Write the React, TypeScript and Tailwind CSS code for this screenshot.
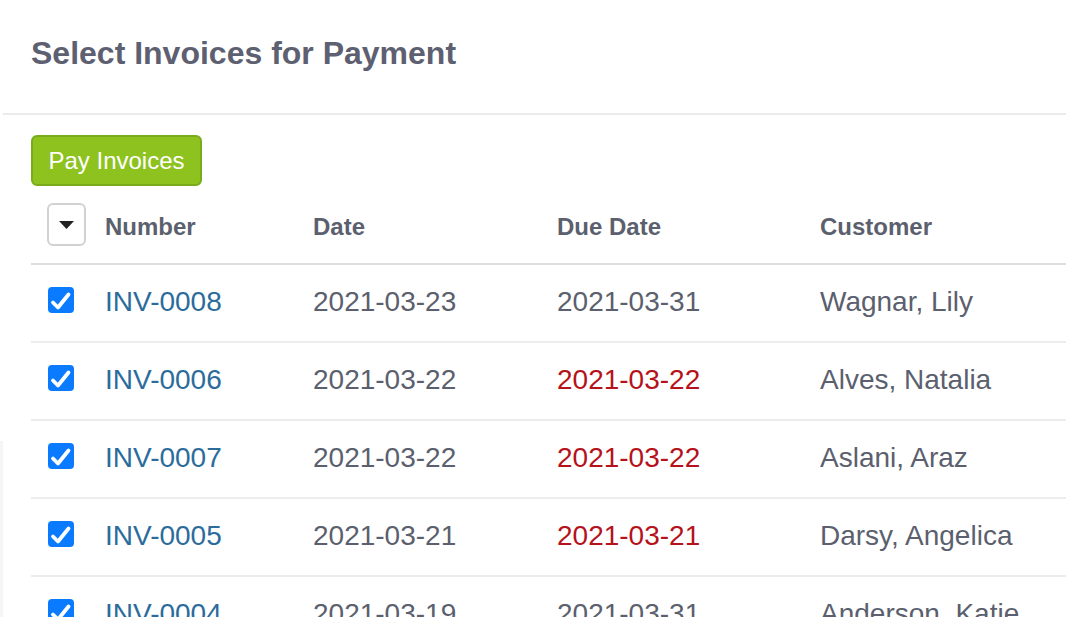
import {Fragment} from "react";

type Invoice = {
    number: string;
    date: string;
    due: string;
    overdue: boolean;
    customer: string;
};

const invoices: Invoice[] = [
    {number: "INV-0008", date: "2021-03-23", due: "2021-03-31", overdue: false, customer: "Wagnar, Lily"},
    {number: "INV-0006", date: "2021-03-22", due: "2021-03-22", overdue: true, customer: "Alves, Natalia"},
    {number: "INV-0007", date: "2021-03-22", due: "2021-03-22", overdue: true, customer: "Aslani, Araz"},
    {number: "INV-0005", date: "2021-03-21", due: "2021-03-21", overdue: true, customer: "Darsy, Angelica"},
    {number: "INV-0004", date: "2021-03-19", due: "2021-03-31", overdue: false, customer: "Anderson, Katie"},
];

const cols = "grid grid-cols-[74px_208px_244px_263px_1fr]";

// zaznaczony checkbox
const CheckBox = () => (
    <div className="mb-[6px] flex h-[26px] w-[26px] items-center justify-center rounded-[4px] bg-[#0a7bff]">
        <svg width="26" height="26" viewBox="0 0 26 26" fill="none">
            <path d="M5 15.5 L10 20.5 L20.5 7.5" stroke="white" strokeWidth="3.8" strokeLinecap="round" strokeLinejoin="round" />
        </svg>
    </div>
);

export default function App() {
    return (
        <div className="flex h-[617px] w-[1066px] overflow-hidden bg-white font-['Liberation_Sans',Arial,sans-serif] text-[#5b5f6e]">
            {/* pasek po lewej z sasiedniego panelu */}
            <div className="flex w-[3px] shrink-0 flex-col">
                <div className="h-[441px]" />
                <div className="flex-1 bg-[#f5f5f4]" />
            </div>

            <div className="min-w-0 flex-1">
                <div className="h-[113px] pl-[28px] pt-[33px]">
                    <h1 className="text-[32px] font-bold leading-[40px] text-[#5d6070]">Select Invoices for Payment</h1>
                </div>
                <div className="h-[2px] bg-[#ebebeb]" />

                <div className="pl-[28px]">
                    <button className="mt-[20px] flex h-[51px] w-[171px] items-center justify-center rounded-[6px] border-2 border-[#7aab1b] bg-[#8dc21f] text-[24px] text-white">
                        Pay Invoices
                    </button>

                    <div className="w-[1300px]">
                        <div className={`${cols} h-[79px] items-center border-b-2 border-[#dedede]`}>
                            <div className="pl-[16px] pb-[1px]">
                                <div className="flex h-[43px] w-[39px] items-center justify-center rounded-[6px] border-2 border-[#d2d2d2]">
                                    <svg width="15" height="8" viewBox="0 0 15 8" className="mt-[2px]">
                                        <path d="M0 0 H15 L7.5 8 Z" fill="#222" />
                                    </svg>
                                </div>
                            </div>
                            {["Number", "Date", "Due Date", "Customer"].map(h => (
                                <div key={h} className="pt-[5px] text-[24px] font-bold text-[#5b5f6e]">{h}</div>
                            ))}
                        </div>

                        {invoices.map(inv => (
                            <Fragment key={inv.number}>
                                <div className={`${cols} h-[78px] items-center border-b-2 border-[#ececec] text-[28px]`}>
                                    <div className="pl-[17px]">
                                        <CheckBox />
                                    </div>
                                    <div className="mb-[2px] text-[#2b6c9c]">{inv.number}</div>
                                    <div className="mb-[2px]">{inv.date}</div>
                                    <div className={inv.overdue ? "mb-[2px] text-[#b5121b]" : "mb-[2px]"}>{inv.due}</div>
                                    <div className="mb-[2px]">{inv.customer}</div>
                                </div>
                            </Fragment>
                        ))}
                    </div>
                </div>
            </div>
        </div>
    );
}
